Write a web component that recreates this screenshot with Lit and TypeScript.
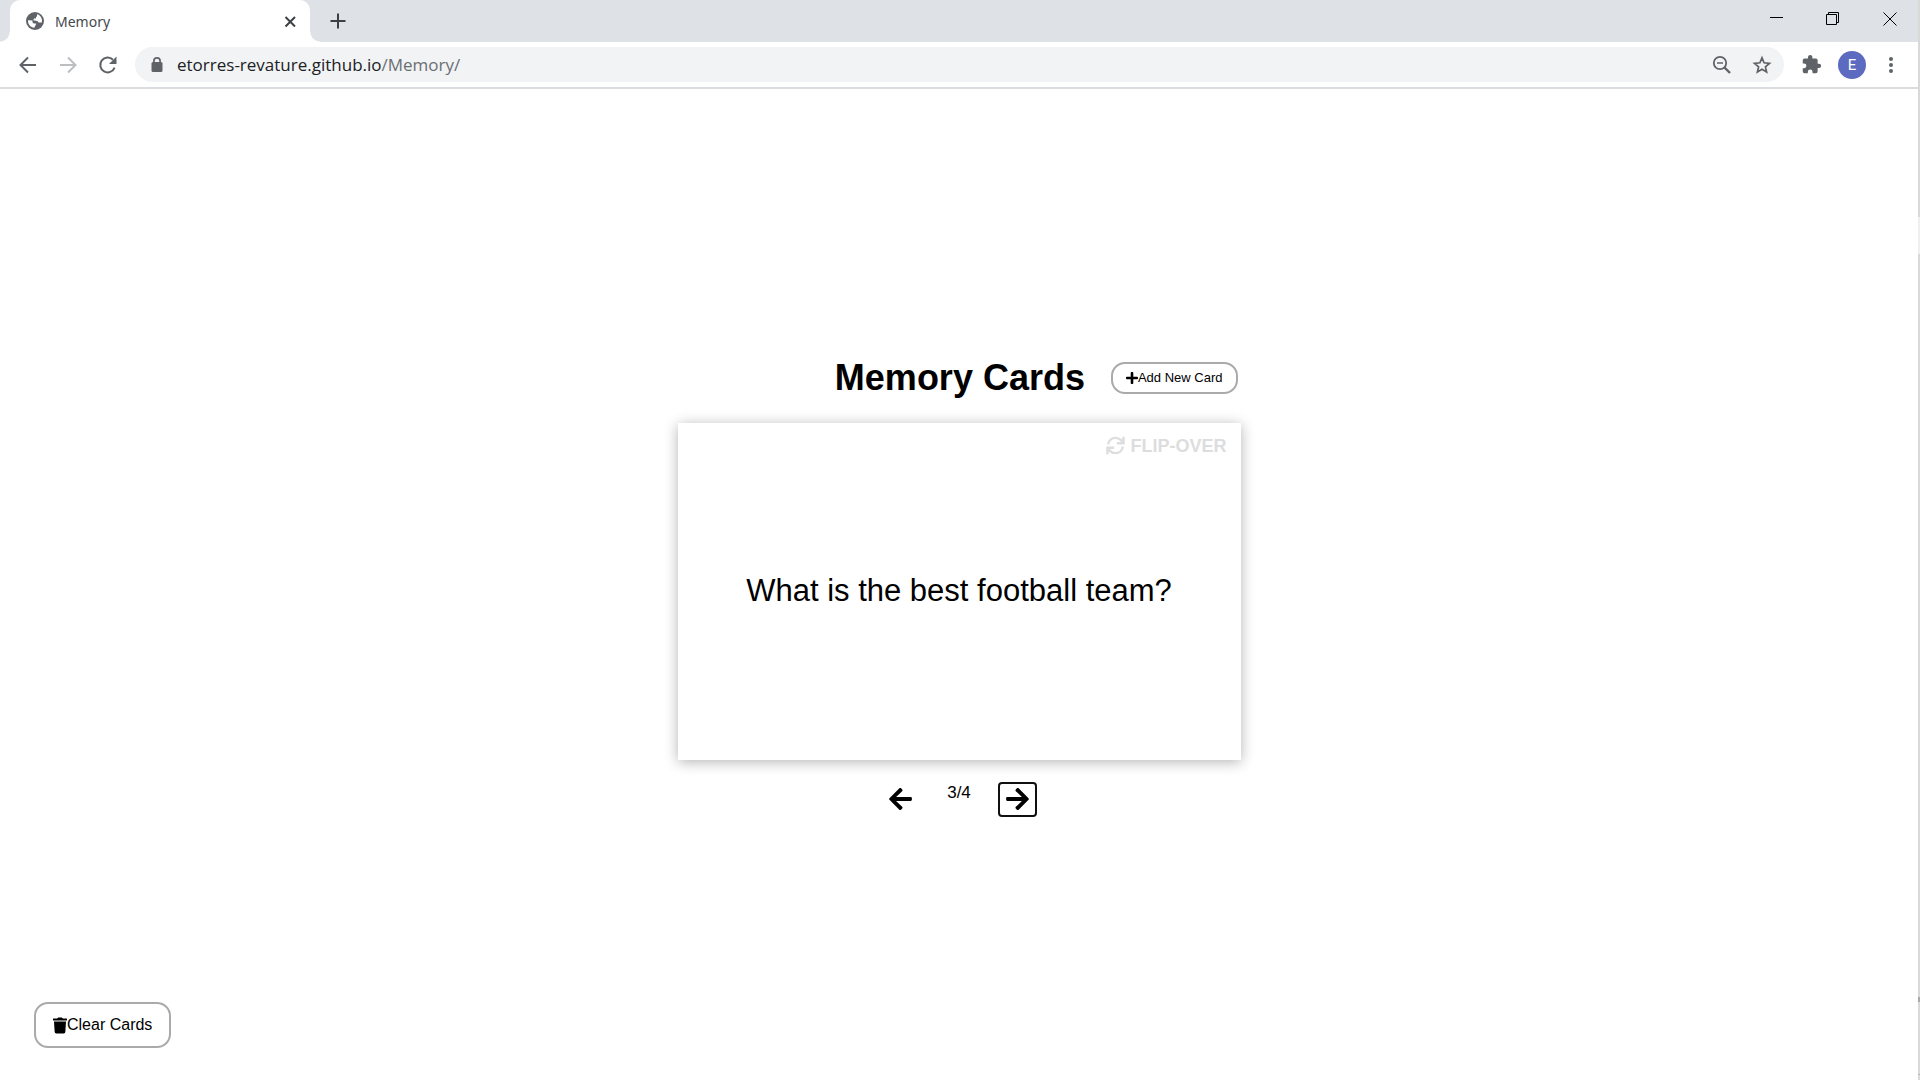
import { LitElement, html, css } from "lit";
import { customElement, state } from "lit/decorators.js";

@customElement("browser-bar")
class BrowserBar extends LitElement {
  static styles = css`
    :host {
      display: block;
      font-family: "Open Sans", "Noto Sans", sans-serif;
    }
    button {
      border: 0;
      padding: 0;
      background: none;
      display: grid;
      place-items: center;
      flex: none;
    }
    svg {
      display: block;
    }
    .tabs {
      display: flex;
      height: 42px;
      background: #dee1e6;
    }
    .tab {
      position: relative;
      display: flex;
      align-items: center;
      width: 300px;
      box-sizing: border-box;
      margin-left: 10px;
      padding: 0 10px 0 16px;
      gap: 9px;
      background: #fff;
      border-radius: 10px 10px 0 0;
      font-family: "Noto Sans", sans-serif;
      font-size: 14px;
      color: #45494d;
    }
    .tab::before,
    .tab::after {
      content: "";
      position: absolute;
      bottom: 0;
      width: 10px;
      height: 10px;
    }
    .tab::before {
      right: 100%;
      background: radial-gradient(circle at 0 0, transparent 9px, #fff 10px);
    }
    .tab::after {
      left: 100%;
      background: radial-gradient(circle at 100% 0, transparent 9px, #fff 10px);
    }
    .title {
      flex: 1;
    }
    .new {
      width: 56px;
    }
    .window {
      display: flex;
      margin-left: auto;
      height: 37px;
    }
    .window button {
      width: 57px;
    }
    .tools {
      display: flex;
      align-items: center;
      height: 45px;
      padding: 0 13px 0 8px;
      border-bottom: 2px solid #dadce0;
    }
    .nav {
      width: 40px;
      height: 40px;
    }
    .address {
      flex: 1;
      display: flex;
      align-items: center;
      height: 35px;
      margin: 0 7px;
      padding: 0 2px 0 12px;
      border-radius: 18px;
      background: #f1f3f4;
    }
    .lock {
      width: 20px;
      margin-right: 10px;
    }
    .url {
      flex: 1;
      font-size: 17px;
      line-height: 24px;
      color: #6b6f73;
      text-decoration: none;
    }
    .host {
      color: #202124;
    }
    .avatar {
      width: 28px;
      height: 28px;
      margin: 0 11px 0 7px;
      border-radius: 50%;
      background: #5c6bc0;
      color: #fff;
      font: 15px "Roboto", sans-serif;
    }
    .menu {
      width: 28px;
      height: 40px;
    }
  `;

  render() {
    return html`
      <div class="tabs">
        <div class="tab">
          <svg width="20" height="20" viewBox="0 0 20 20">
            <circle cx="9" cy="10" r="9" fill="#5f6368" />
            <path d="M11 3.200c2.800.6 5 3.200 5 6.600 0 .6-.1 1.100-.2 1.600h-3.300c-.5-1-1.300-1.600-2.400-1.700l-1.800-.2c-.7 0-.8-.6-.8-1 0-.7.5-1 1.200-1h1.300V5.700h1zM2 9.200l4.500.3v1.300c0 1 .7 1.600 1.600 1.600h1.700c.5 0 .5.400.3.800l-1 1.700-.7 1.900C4.700 16.500 2 13.500 2 10z" fill="#fff" />
          </svg>
          <span class="title">Memory</span>
          <button aria-label="Close tab">
            <svg width="20" height="20" viewBox="0 0 20 20"><path d="M5.500 6l9.500 9.500M15 6l-9.500 9.500" stroke="#3c4043" stroke-width="2" /></svg>
          </button>
        </div>
        <button class="new" aria-label="New tab">
          <svg width="20" height="20" viewBox="0 0 20 20"><path d="M10 2.500v15M2.500 10h15" stroke="#3c4043" stroke-width="2" /></svg>
        </button>
        <div class="window">
          <button aria-label="Minimize">
            <svg width="14" height="14" viewBox="0 0 14 14"><path d="M1 5.500h13" stroke="#000" /></svg>
          </button>
          <button aria-label="Restore">
            <svg width="14" height="14" viewBox="0 0 14 14" fill="none" stroke="#000"><path d="M.5 2.500h10v10H.5zM2.500 2V.500h10v10H11" /></svg>
          </button>
          <button aria-label="Close window">
            <svg width="14" height="14" viewBox="0 0 14 14"><path d="M.5.500l13 13M13.500.500l-13 13" stroke="#000" /></svg>
          </button>
        </div>
      </div>
      <div class="tools">
        <button class="nav" aria-label="Back">
          <svg width="20" height="20" viewBox="0 0 20 20" fill="none" stroke="#5f6368" stroke-width="2"><path d="M18 10H3M10 2.500L2.500 10l7.500 7.500" /></svg>
        </button>
        <button class="nav" aria-label="Forward">
          <svg width="20" height="20" viewBox="0 0 20 20" fill="none" stroke="#bcbec1" stroke-width="2"><path d="M2 10h15M10 2.500l7.500 7.500-7.500 7.500" /></svg>
        </button>
        <button class="nav" aria-label="Reload">
          <svg width="20" height="20" viewBox="0 0 20 20"><path d="M16.600 12.600A7.400 7.400 0 1 1 15 4.800" fill="none" stroke="#5f6368" stroke-width="2" /><path d="M18.500 1.500V9H11z" fill="#5f6368" /></svg>
        </button>
        <div class="address">
          <svg class="lock" height="20" viewBox="0 0 20 20"><rect x="4.500" y="7" width="11" height="10" rx="1.500" fill="#5f6368" /><path d="M6.900 8V6a3.100 3.100 0 0 1 6.200 0v2" fill="none" stroke="#5f6368" stroke-width="1.700" /></svg>
          <a class="url" href="#"><span class="host">etorres-revature.github.io</span>/Memory/</a>
          <button class="nav" aria-label="Zoom">
            <svg width="20" height="20" viewBox="0 0 20 20" fill="none" stroke="#5f6368"><circle cx="8" cy="8" r="6.200" stroke-width="1.800" /><path d="M12.500 12.500l5.500 5.500" stroke-width="2.400" /><path d="M5 8h6" stroke-width="1.500" /></svg>
          </button>
          <button class="nav" aria-label="Bookmark this page">
            <svg width="20" height="20" viewBox="0 0 20 20"><path d="M10 2.800l2.100 5 5.400.5-4.100 3.500 1.200 5.300L10 14.300l-4.600 2.800 1.200-5.300-4.100-3.500 5.400-.5z" fill="none" stroke="#5f6368" stroke-width="1.700" /></svg>
          </button>
        </div>
        <button class="nav" aria-label="Extensions">
          <svg width="21" height="21" viewBox="0 0 24 24"><path d="M20.500 11H19V7a2 2 0 0 0-2-2h-4V3.500a2.500 2.500 0 0 0-5 0V5H4a2 2 0 0 0-2 2v3.800h1.500a2.700 2.700 0 0 1 0 5.400H2V20a2 2 0 0 0 2 2h3.800v-1.500a2.700 2.700 0 0 1 5.400 0V22H17a2 2 0 0 0 2-2v-4h1.500a2.500 2.500 0 0 0 0-5z" fill="#5f6368" /></svg>
        </button>
        <button class="avatar" aria-label="Profile">E</button>
        <button class="menu" aria-label="Menu">
          <svg width="4" height="18" viewBox="0 0 4 18" fill="#5f6368"><circle cx="2" cy="3" r="2" /><circle cx="2" cy="9" r="2" /><circle cx="2" cy="15" r="2" /></svg>
        </button>
      </div>
    `;
  }
}

@customElement("app-root")
class AppRoot extends LitElement {
  @state() private current = 3;
  private total = 4;

  static styles = css`
    :host {
      display: flex;
      min-height: 100vh;
      background: #fff;
      color: #000;
      font-family: "Liberation Sans", Arial, sans-serif;
    }
    svg {
      display: block;
    }
    button {
      background: none;
      color: inherit;
      font-family: inherit;
      outline: none;
    }
    .page {
      flex: 1;
      display: flex;
      flex-direction: column;
    }
    .edge {
      width: 2px;
      background: linear-gradient(
        #d9d9d9 217px,
        #efefef 217px 254px,
        #d9d9d9 254px 997px,
        #a8a8a8 997px 1002px,
        #d9d9d9 1002px 1074px,
        #b8b8b8 1074px 1075px,
        #d9d9d9 1075px
      );
    }
    main {
      flex: 1;
      display: grid;
      grid-template-rows: 1fr auto 1fr;
    }
    .deck {
      grid-row: 2;
      justify-self: center;
      display: flex;
      flex-direction: column;
      align-items: center;
      padding-top: 4px;
    }
    .heading {
      align-self: flex-end;
      display: flex;
      align-items: center;
      gap: 26px;
      padding-right: 3px;
      margin-bottom: 24px;
    }
    h1 {
      margin: 0;
      font-size: 36px;
      line-height: 42px;
    }
    .pill {
      display: flex;
      align-items: center;
      border: 2px solid #aaa;
      border-radius: 14px;
      padding: 6px 13px;
      font-size: 13px;
      line-height: 16px;
    }
    .card {
      display: flex;
      flex-direction: column;
      width: 563px;
      height: 337px;
      box-shadow: 0 2px 13px rgba(0, 0, 0, 0.3);
      background: #fff;
    }
    .flip {
      display: flex;
      align-items: center;
      align-self: flex-end;
      gap: 5px;
      margin: 12px 14px 0 0;
      border: 0;
      padding: 0;
      color: #ddd;
      font-size: 18px;
      line-height: 22px;
      font-weight: bold;
    }
    .question {
      flex: 1;
      margin: 0;
      padding-bottom: 34px;
      display: grid;
      place-items: center;
      font-size: 31px;
      line-height: 36px;
    }
    .pager {
      display: flex;
      gap: 27px;
      margin-top: 22px;
    }
    .step {
      border: 2px solid transparent;
      border-radius: 4px;
      padding: 0;
      width: 39px;
      height: 35px;
      display: grid;
      place-items: center;
    }
    .focused {
      border-color: #101010;
    }
    .count {
      font-size: 17px;
      line-height: 22px;
    }
    .foot {
      grid-row: 3;
      align-self: end;
      justify-self: start;
      padding: 0 0 32px 34px;
    }
    .large {
      padding: 12px 17px;
      font-size: 16px;
      line-height: 18px;
    }
  `;

  private step(by: number) {
    this.current = Math.min(this.total, Math.max(1, this.current + by));
  }

  render() {
    return html`
      <div class="page">
        <browser-bar></browser-bar>
        <main>
          <section class="deck">
            <div class="heading">
              <h1>Memory Cards</h1>
              <button class="pill">
                <svg width="12" height="14" viewBox="0 32 448 448"><path d="M416 208H272V64c0-17.700-14.300-32-32-32h-32c-17.700 0-32 14.300-32 32v144H32c-17.700 0-32 14.300-32 32v32c0 17.700 14.300 32 32 32h144v144c0 17.700 14.300 32 32 32h32c17.700 0 32-14.300 32-32V304h144c17.700 0 32-14.300 32-32v-32c0-17.700-14.300-32-32-32z" /></svg>
                <span>Add New Card</span>
              </button>
            </div>
            <article class="card">
              <button class="flip">
                <svg width="19" height="19" viewBox="0 0 512 512" fill="none" stroke="currentColor" stroke-width="66"><path d="M56 226C76 124 158 50 256 50c62 0 112 24 150 62l42 42" /><path d="M472 20v178H294" /><path d="M456 286c-20 102-102 176-200 176-62 0-112-24-150-62l-42-42" /><path d="M40 492V314h178" /></svg>
                <span>FLIP-OVER</span>
              </button>
              <p class="question">What is the best football team?</p>
            </article>
            <nav class="pager" aria-label="Cards">
              <button class="step" aria-label="Previous card" @click=${() => this.step(-1)}>
                <svg width="23" height="26" viewBox="0 0 448 512"><path d="M257.500 445.100l-22.200 22.200c-9.400 9.400-24.600 9.400-33.900 0L7 273c-9.400-9.400-9.400-24.600 0-33.900L201.400 44.700c9.400-9.400 24.600-9.400 33.900 0l22.200 22.200c9.500 9.500 9.300 25-.4 34.300L136.600 216H424c13.300 0 24 10.700 24 24v32c0 13.300-10.700 24-24 24H136.600l120.500 114.800c9.800 9.300 10 24.800.4 34.300z" /></svg>
              </button>
              <span class="count">${this.current}/${this.total}</span>
              <button class="step focused" aria-label="Next card" @click=${() => this.step(1)}>
                <svg width="23" height="26" viewBox="0 0 448 512"><path d="M190.500 66.900l22.200-22.200c9.400-9.400 24.600-9.400 33.900 0L441 239c9.400 9.400 9.400 24.600 0 33.900L246.600 467.300c-9.400 9.400-24.600 9.400-33.900 0l-22.200-22.200c-9.500-9.500-9.300-25 .4-34.300L311.400 296H24c-13.300 0-24-10.700-24-24v-32c0-13.300 10.700-24 24-24h287.400L190.900 101.200c-9.800-9.300-10-24.800-.4-34.300z" /></svg>
              </button>
            </nav>
          </section>
          <div class="foot">
            <button class="pill large">
              <svg width="14" height="17" viewBox="0 0 448 512"><path d="M432 32H312l-9.400-18.700A24 24 0 0 0 281.100 0H166.800a23.720 23.720 0 0 0-21.400 13.300L136 32H16A16 16 0 0 0 0 48v32a16 16 0 0 0 16 16h416a16 16 0 0 0 16-16V48a16 16 0 0 0-16-16zM53.200 467a48 48 0 0 0 47.900 45h245.800a48 48 0 0 0 47.900-45L416 128H32z" /></svg>
              <span>Clear Cards</span>
            </button>
          </div>
        </main>
      </div>
      <div class="edge"></div>
    `;
  }
}
